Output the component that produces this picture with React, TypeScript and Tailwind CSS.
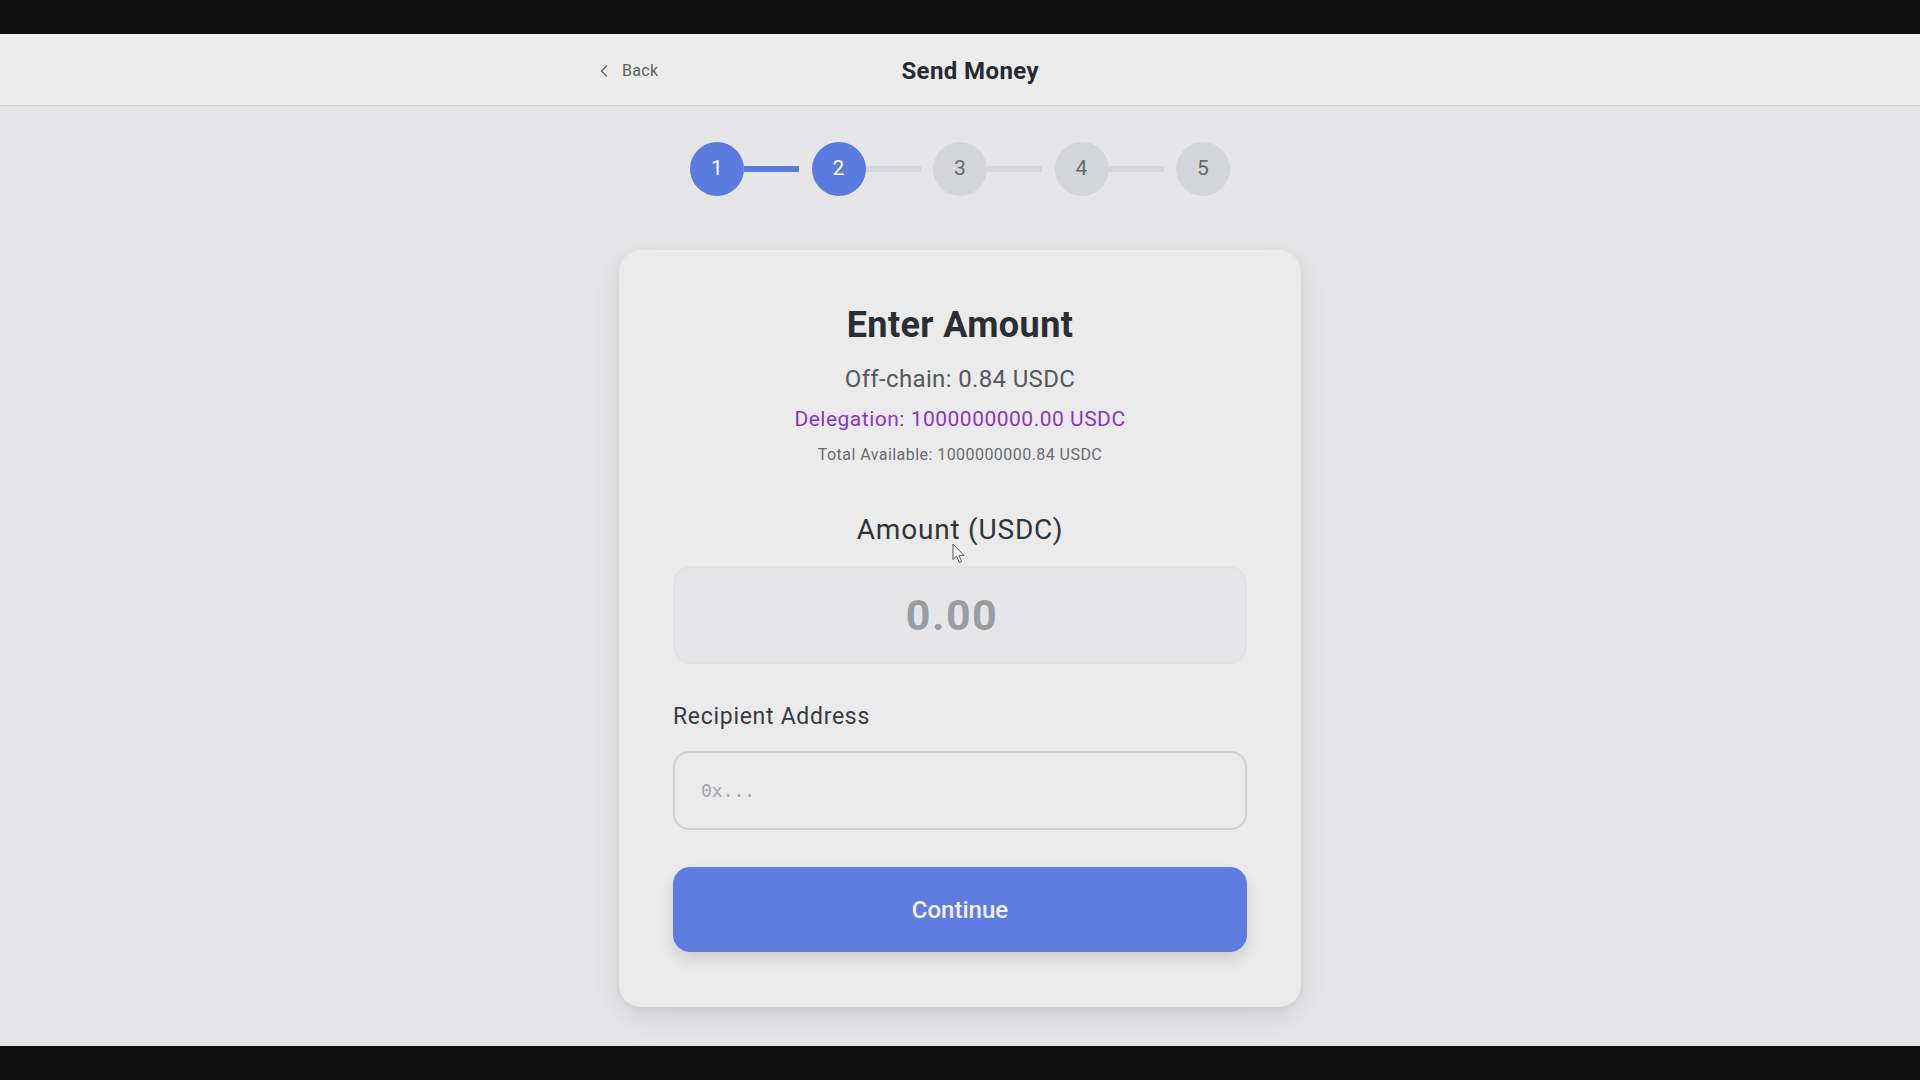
import React from "react";
import { ChevronLeft } from "lucide-react";

function Stepper() {
  const steps = [1, 2, 3, 4, 5];
  const current = 2;
  return (
    <div className="flex items-center justify-center">
      {steps.map((s) => (
        <div key={s} className="flex items-center">
          <div
            className={
              s <= current
                ? "w-[54px] h-[54px] rounded-full bg-[#5b7be0] text-white flex items-center justify-center text-[21px]"
                : "w-[54px] h-[54px] rounded-full bg-[#d4d5d8] text-[#66686c] flex items-center justify-center text-[21px]"
            }
          >
            {s}
          </div>
          {s < 5 && (
            <div
              className={
                s < current
                  ? "w-[55px] h-[6px] bg-[#5b7be0] mr-[12.5px]"
                  : "w-[55px] h-[6px] bg-[#d5d6d9] mr-[12.5px]"
              }
            />
          )}
        </div>
      ))}
    </div>
  );
}

function Cursor() {
  return (
    <svg
      className="absolute left-[952px] top-[543px] pointer-events-none"
      width="15"
      height="21"
      viewBox="0 0 15 21"
    >
      <path
        d="M1 1 L1 16.5 L4.6 13.2 L7.3 19.5 L9.6 18.5 L7 12.4 L12 12.4 Z"
        fill="#f4f4f4"
        stroke="#55575c"
        strokeWidth="1"
        strokeLinejoin="round"
      />
    </svg>
  );
}

export default function App() {
  return (
    <div
      className="relative w-full h-screen flex flex-col bg-[#e6e6e8] overflow-hidden"
      style={{ fontFamily: "Roboto, 'Noto Sans', sans-serif" }}
    >
      <div className="h-[34px] bg-[#101010] shrink-0" />
      <div className="h-[3px] bg-[#f3f3f3] shrink-0" />
      <header className="h-[69px] shrink-0 bg-[#ececec] border-b border-[#d6d6d8] flex items-center">
        <div className="w-[768px] mx-auto pl-[18px] pr-[24px] flex items-center">
          <button className="flex items-center gap-2 text-[16px] text-[#5c5f66] leading-6 tracking-[0.3px]">
            <ChevronLeft size={20} strokeWidth={1.5} />
            <span>Back</span>
          </button>
          <h1 className="flex-1 text-center text-[24px] font-bold text-[#262a31] leading-8 tracking-[0.4px] pl-[2px]">
            Send Money
          </h1>
          <div className="w-[40px]" />
        </div>
      </header>
      <main className="flex-1 flex flex-col items-center pt-[36px]">
        <Stepper />
        <div className="mt-[54px] w-[682px] bg-[#ebebeb] rounded-[22px] shadow-[0_10px_30px_rgba(0,0,0,0.10),0_2px_6px_rgba(0,0,0,0.05)] px-[54px] pt-[55px] pb-[55px] flex flex-col">
          <h2 className="text-center text-[36px] leading-[40px] font-bold text-[#2a2e35] tracking-[0.4px]">
            Enter Amount
          </h2>
          <p className="mt-[18px] text-center text-[24px] leading-[32px] text-[#55585e] tracking-[0.35px]">
            Off-chain: 0.84 USDC
          </p>
          <p className="mt-[10px] text-center text-[21px] leading-[28px] text-[#8a35c8] tracking-[0.5px]">
            Delegation: 1000000000.00 USDC
          </p>
          <p className="mt-[10px] text-center text-[16px] leading-[24px] text-[#6a6c70] tracking-[0.45px]">
            Total Available: 1000000000.84 USDC
          </p>
          <label className="mt-[45px] text-center text-[28px] leading-[36px] text-[#30343b] tracking-[0.8px]">
            Amount (USDC)
          </label>
          <div className="mt-[18px] h-[98px] rounded-[18px] bg-[#e6e6e8] border-2 border-[#e2e2e4] flex items-center justify-center pr-[16px]">
            <span className="text-[43px] font-bold text-[#9a9ca3] leading-none tracking-[1.5px]">0.00</span>
          </div>
          <label className="mt-[37px] text-[23px] leading-[32px] text-[#383c43] tracking-[0.7px]">
            Recipient Address
          </label>
          <div className="mt-[18px] h-[79px] rounded-[16px] border-2 border-[#cfd0d3] flex items-center pl-[26px]">
            <span
              className="text-[18px] text-[#a3a5aa]"
              style={{ fontFamily: "'DejaVu Sans Mono', monospace" }}
            >
              0x...
            </span>
          </div>
          <button className="mt-[37px] h-[85px] rounded-[17px] bg-[#5f7de1] text-[#eef1ff] text-[24px] font-medium shadow-[0_8px_16px_rgba(0,0,0,0.12)]">
            Continue
          </button>
        </div>
      </main>
      <div className="h-[34px] bg-[#101010] shrink-0" />
      <Cursor />
    </div>
  );
}
